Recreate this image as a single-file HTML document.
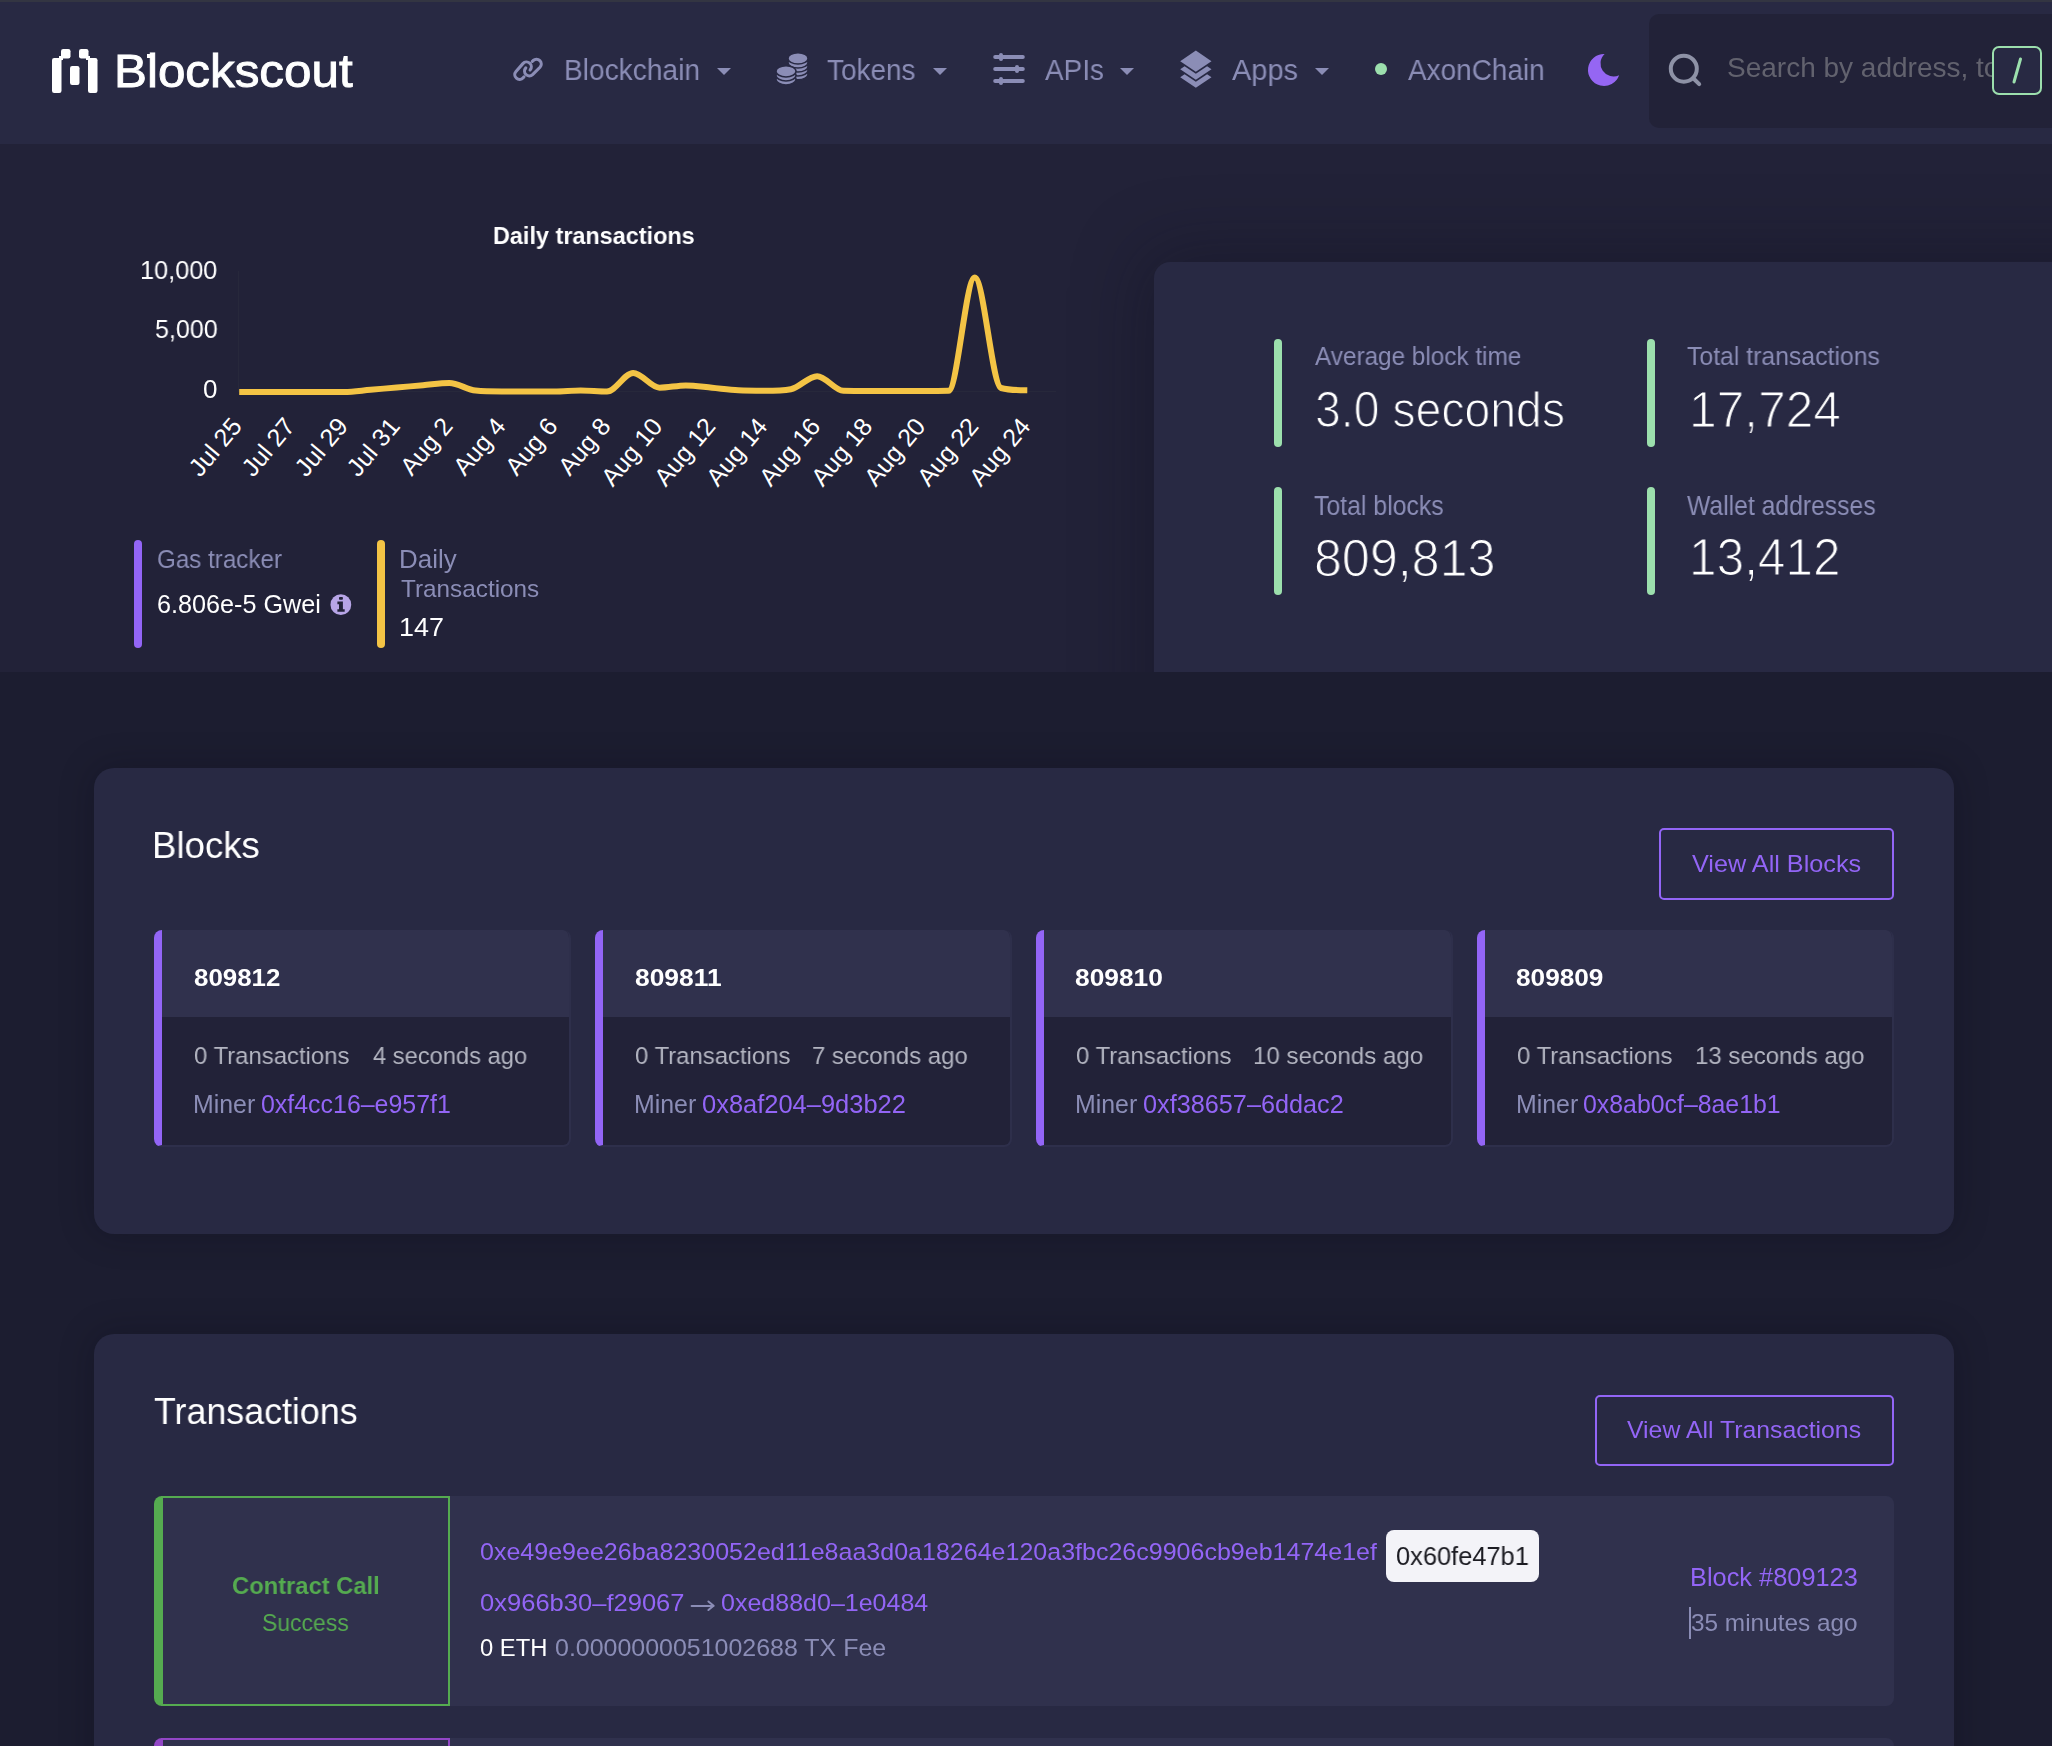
<!DOCTYPE html>
<html><head><meta charset="utf-8"><title>Blockscout</title>
<style>
html,body{margin:0;padding:0;width:2052px;height:1746px;overflow:hidden;background:#1c1d30;font-family:"Liberation Sans",sans-serif;}
.a{position:absolute;box-sizing:border-box}
.t{position:absolute;white-space:nowrap;line-height:1;transform-origin:0 0;will-change:transform}
.mk{display:inline-block;width:0;height:0;vertical-align:baseline}
.xl{position:absolute;white-space:nowrap;line-height:1;color:#fff;font-size:24px;transform-origin:100% 50%;transform:rotate(-50deg)}
</style></head><body>
<!-- top strip + nav -->
<div class="a" style="left:0;top:0;width:2052px;height:2px;background:#333542"></div>
<div class="a" style="left:0;top:2px;width:2052px;height:142px;background:#282943"></div>
<!-- logo icon -->
<svg class="a" style="left:50px;top:47px" width="50" height="48" viewBox="0 0 50 48">
  <g fill="#fff">
    <rect x="2" y="11" width="9.5" height="35" rx="2.2"/>
    <rect x="11" y="2" width="9.5" height="9.5" rx="2.2"/>
    <rect x="9" y="9" width="4" height="4"/>
    <rect x="20" y="19" width="9.5" height="19" rx="2.2"/>
    <rect x="29" y="2" width="9.5" height="9.5" rx="2.2"/>
    <rect x="36" y="9" width="4" height="4"/>
    <rect x="38" y="11" width="9.5" height="35" rx="2.2"/>
  </g>
</svg>
<div class="a" style="left:146.6px;top:53.8px;width:4px;height:4.4px;background:#fff"></div>
<!-- nav icons -->
<svg class="a" style="left:505px;top:50px" width="46" height="38" viewBox="0 0 46 38">
  <g fill="none" stroke="#8b8db6" stroke-width="3.1" stroke-linecap="round">
    <path d="M19.02 26.84 L18.20 27.78 A4.8 4.8 0 0 1 11.00 21.42 L17.90 13.62 A4.8 4.8 0 0 1 25.10 19.98 L25.10 19.98"/>
    <path d="M27.32 11.39 L28.21 10.51 A4.8 4.8 0 0 1 34.99 17.29 L27.59 24.69 A4.8 4.8 0 0 1 20.81 17.91 L20.81 17.91"/>
  </g>
</svg>
<svg class="a" style="left:770px;top:45px" width="50" height="50" viewBox="0 0 50 50">
  <g fill="#8b8db6" stroke="#282943" stroke-width="1.5">
    <ellipse cx="28" cy="29.2" rx="10" ry="5.6"/>
    <ellipse cx="28" cy="25.3" rx="10" ry="5.6"/>
    <ellipse cx="28" cy="21.4" rx="10" ry="5.6"/>
    <ellipse cx="28" cy="17.5" rx="10" ry="5.6"/>
    <ellipse cx="28" cy="13.4" rx="10" ry="5.6"/>
    <ellipse cx="16" cy="34.3" rx="10" ry="5.6"/>
    <ellipse cx="16" cy="30.3" rx="10" ry="5.6"/>
    <ellipse cx="16" cy="26.3" rx="10" ry="5.6"/>
  </g>
</svg>
<svg class="a" style="left:985px;top:45px" width="50" height="50" viewBox="0 0 50 50">
  <g fill="#8b8db6">
    <rect x="8.2" y="10" width="31.6" height="4" rx="2"/>
    <rect x="8.2" y="22.1" width="31.6" height="4" rx="2"/>
    <rect x="8.2" y="34.1" width="31.6" height="4" rx="2"/>
    <rect x="14" y="8" width="4" height="8" rx="2"/>
    <rect x="30" y="20.1" width="4" height="8" rx="2"/>
    <rect x="14" y="32.1" width="4" height="8" rx="2"/>
  </g>
</svg>
<svg class="a" style="left:1171px;top:45px" width="50" height="50" viewBox="0 0 50 50">
  <g fill="#8b8db6">
    <path d="M24.85 5.6 L40.5 16.2 L24.85 26.8 L9.2 16.2 Z"/>
    <path d="M9.2 24.2 L13.6 21.2 L24.85 28.8 L36.1 21.2 L40.5 24.2 L24.85 34.8 Z"/>
    <path d="M9.2 32.2 L13.6 29.2 L24.85 36.8 L36.1 29.2 L40.5 32.2 L24.85 42.8 Z"/>
  </g>
</svg>
<svg class="a" style="left:714px;top:67px" width="18" height="10" viewBox="0 0 18 10"><path d="M3 1 L17 1 L10 8 Z" fill="#8b8db6"/></svg>
<svg class="a" style="left:930px;top:67px" width="18" height="10" viewBox="0 0 18 10"><path d="M3 1 L17 1 L10 8 Z" fill="#8b8db6"/></svg>
<svg class="a" style="left:1117px;top:67px" width="18" height="10" viewBox="0 0 18 10"><path d="M3 1 L17 1 L10 8 Z" fill="#8b8db6"/></svg>
<svg class="a" style="left:1312px;top:67px" width="18" height="10" viewBox="0 0 18 10"><path d="M3 1 L17 1 L10 8 Z" fill="#8b8db6"/></svg>
<div class="a" style="left:1375px;top:63px;width:12px;height:12px;border-radius:6px;background:#9cdfad"></div>
<!-- moon -->
<svg class="a" style="left:1575px;top:40px" width="60" height="60" viewBox="0 0 60 60">
  <path d="M29.61 14.01 A16 16 0 1 0 44.12 35.22 A13 13 0 0 1 29.61 14.01 Z" fill="#9566f3"/>
</svg>
<!-- search -->
<div class="a" style="left:1649px;top:14px;width:420px;height:114px;border-radius:10px;background:#222238"></div>
<svg class="a" style="left:1660px;top:45px" width="50" height="50" viewBox="0 0 50 50">
  <circle cx="23.8" cy="23.7" r="13" fill="none" stroke="#8e92a6" stroke-width="4"/>
  <path d="M33.5 33.5 L39.2 39.2" stroke="#8e92a6" stroke-width="4" stroke-linecap="round"/>
</svg>
<div class="t" style="left:1727px;top:52.5px;font-size:28px;color:#62626e;width:265px;overflow:hidden;line-height:30px">Search by address, token symbol, name</div>
<div class="a" style="left:1992px;top:46px;width:50px;height:49px;border:2px solid #9cdfad;border-radius:7px;background:#282943"></div>
<svg class="a" style="left:1992px;top:46px" width="50" height="49" viewBox="0 0 50 49"><path d="M28.5 13 L22 36" stroke="#9cdfad" stroke-width="3" stroke-linecap="round"/></svg>

<!-- banner -->
<div class="a" style="left:0;top:144px;width:2052px;height:528px;background:#222238;overflow:hidden">
  <div class="a" style="left:1154px;top:118px;width:1000px;height:600px;background:#282943;border-radius:16px;box-shadow:0 0 70px 10px rgba(15,15,30,0.35)"></div>
</div>
<!-- stat bars -->
<div class="a" style="left:1274px;top:339px;width:8px;height:108px;border-radius:4px;background:#9cdfad"></div>
<div class="a" style="left:1647px;top:339px;width:8px;height:108px;border-radius:4px;background:#9cdfad"></div>
<div class="a" style="left:1274px;top:487px;width:8px;height:108px;border-radius:4px;background:#9cdfad"></div>
<div class="a" style="left:1647px;top:487px;width:8px;height:108px;border-radius:4px;background:#9cdfad"></div>
<!-- legend bars -->
<div class="a" style="left:134px;top:540px;width:8px;height:108px;border-radius:4px;background:#9365f6"></div>
<div class="a" style="left:377px;top:540px;width:8px;height:108px;border-radius:4px;background:#f4c445"></div>
<svg class="a" style="left:320px;top:585px" width="40" height="40" viewBox="0 0 40 40">
  <circle cx="20.85" cy="19.7" r="10.4" fill="#b7a5e6"/>
  <rect x="19" y="11.9" width="3.9" height="2.9" rx="0.8" fill="#222238"/>
  <path d="M17.4 16.4 H22.9 V24.3 H24.7 V26.8 H17.4 V24.3 H19 V19.3 H17.4 Z" fill="#222238"/>
</svg>
<!-- chart -->
<svg class="a" style="left:0;top:144px" width="1100" height="400" viewBox="0 144 1100 400">
  <line x1="238.5" y1="271" x2="238.5" y2="392" stroke="#27283b" stroke-width="1"/>
  <line x1="238" y1="391.5" x2="1056" y2="391.5" stroke="#27283b" stroke-width="1"/>
  <path id="cl" d="M239.20 392.00 C247.96 392.00 256.71 392.00 265.47 392.00 C274.23 392.00 282.98 392.00 291.74 392.00 C300.50 392.00 309.25 392.00 318.01 392.00 C326.77 392.00 335.52 392.00 344.28 392.00 C353.04 392.00 361.79 390.50 370.55 389.75 C379.31 389.00 388.06 388.25 396.82 387.50 C405.58 386.75 414.33 386.00 423.09 385.25 C431.85 384.50 440.60 383.00 449.36 383.00 C458.12 383.00 466.87 389.70 475.63 390.60 C484.39 391.50 493.14 391.50 501.90 391.50 C510.66 391.50 519.41 391.50 528.17 391.50 C536.93 391.50 545.68 391.50 554.44 391.50 C563.20 391.50 571.95 390.50 580.71 390.50 C589.47 390.50 598.22 391.50 606.98 391.50 C615.74 391.50 624.49 372.90 633.25 372.90 C642.01 372.90 650.76 387.70 659.52 387.70 C668.28 387.70 677.03 385.40 685.79 385.40 C694.55 385.40 703.30 386.98 712.06 387.80 C720.82 388.62 729.57 389.80 738.33 390.30 C747.09 390.80 755.84 390.80 764.60 390.80 C773.36 390.80 782.11 390.80 790.87 389.20 C799.63 387.60 808.38 376.20 817.14 376.20 C825.90 376.20 834.65 390.60 843.41 390.80 C852.17 391.00 860.92 391.00 869.68 391.00 C878.44 391.00 887.19 391.00 895.95 391.00 C904.71 391.00 913.46 391.00 922.22 391.00 C930.98 391.00 939.73 391.00 948.49 390.80 C957.25 390.60 966.00 277.50 974.76 277.50 C983.52 277.50 992.27 385.70 1001.03 388.00 C1009.79 390.30 1018.54 390.21 1027.30 390.30" fill="none" stroke="#f4c445" stroke-width="6" stroke-linejoin="round"/>
</svg>
<div class="xl" style="right:1814.80px;top:408.50px;font-size:25px;">Jul 25</div>
<div class="xl" style="right:1762.26px;top:408.50px;font-size:25px;">Jul 27</div>
<div class="xl" style="right:1709.72px;top:408.50px;font-size:25px;">Jul 29</div>
<div class="xl" style="right:1657.18px;top:408.50px;font-size:25px;">Jul 31</div>
<div class="xl" style="right:1604.64px;top:408.50px;font-size:25px;">Aug 2</div>
<div class="xl" style="right:1552.10px;top:408.50px;font-size:25px;">Aug 4</div>
<div class="xl" style="right:1499.56px;top:408.50px;font-size:25px;">Aug 6</div>
<div class="xl" style="right:1447.02px;top:408.50px;font-size:25px;">Aug 8</div>
<div class="xl" style="right:1394.48px;top:408.50px;font-size:25px;">Aug 10</div>
<div class="xl" style="right:1341.94px;top:408.50px;font-size:25px;">Aug 12</div>
<div class="xl" style="right:1289.40px;top:408.50px;font-size:25px;">Aug 14</div>
<div class="xl" style="right:1236.86px;top:408.50px;font-size:25px;">Aug 16</div>
<div class="xl" style="right:1184.32px;top:408.50px;font-size:25px;">Aug 18</div>
<div class="xl" style="right:1131.78px;top:408.50px;font-size:25px;">Aug 20</div>
<div class="xl" style="right:1079.24px;top:408.50px;font-size:25px;">Aug 22</div>
<div class="xl" style="right:1026.70px;top:408.50px;font-size:25px;">Aug 24</div>

<!-- blocks card -->
<div class="a" style="left:94px;top:768px;width:1860px;height:466px;border-radius:20px;background:#282943;box-shadow:0 0 34px 2px rgba(8,8,18,0.22)"></div>
<div class="a" style="left:1659px;top:828px;width:235px;height:72px;border:2px solid #9365f6;border-radius:5px"></div>
<div class="a" style="left:154px;top:930px;width:417px;height:217px;border-radius:8px;overflow:hidden;background:#222238;border-left:8px solid #9365f6;border-right:2px solid #2e2f4b;border-bottom:2px solid #2e2f4b"><div class="a" style="left:0;top:0;width:420px;height:87px;background:#30314d"></div></div>
<div class="a" style="left:595px;top:930px;width:417px;height:217px;border-radius:8px;overflow:hidden;background:#222238;border-left:8px solid #9365f6;border-right:2px solid #2e2f4b;border-bottom:2px solid #2e2f4b"><div class="a" style="left:0;top:0;width:420px;height:87px;background:#30314d"></div></div>
<div class="a" style="left:1036px;top:930px;width:417px;height:217px;border-radius:8px;overflow:hidden;background:#222238;border-left:8px solid #9365f6;border-right:2px solid #2e2f4b;border-bottom:2px solid #2e2f4b"><div class="a" style="left:0;top:0;width:420px;height:87px;background:#30314d"></div></div>
<div class="a" style="left:1477px;top:930px;width:417px;height:217px;border-radius:8px;overflow:hidden;background:#222238;border-left:8px solid #9365f6;border-right:2px solid #2e2f4b;border-bottom:2px solid #2e2f4b"><div class="a" style="left:0;top:0;width:420px;height:87px;background:#30314d"></div></div>

<!-- transactions card -->
<div class="a" style="left:94px;top:1334px;width:1860px;height:600px;border-radius:20px;background:#282943;box-shadow:0 0 34px 2px rgba(8,8,18,0.22)"></div>
<div class="a" style="left:1595px;top:1395px;width:299px;height:71px;border:2px solid #9365f6;border-radius:5px"></div>
<!-- tx tile 1 -->
<div class="a" style="left:154px;top:1496px;width:1740px;height:210px;border-radius:8px;background:#30314d;border-left:8px solid #55ab50"></div>
<div class="a" style="left:161px;top:1496px;width:289px;height:210px;border:2px solid #55ab50"></div>
<div class="a" style="left:1386px;top:1530px;width:153px;height:52px;border-radius:8px;background:#f3f3f8"></div>
<div class="a" style="left:1689px;top:1607px;width:2px;height:32px;background:#8b8db6"></div>
<!-- tx tile 2 (cut) -->
<div class="a" style="left:154px;top:1738px;width:1740px;height:210px;border-radius:8px;background:#30314d;border-left:8px solid #9246c6"></div>
<div class="a" style="left:161px;top:1738px;width:289px;height:210px;border:2px solid #9246c6"></div>

<svg class="a" style="left:685px;top:1590px" width="40" height="25" viewBox="0 0 40 25">
  <g fill="none" stroke="#8b8db6" stroke-width="2" stroke-linecap="round" stroke-linejoin="round">
    <path d="M6.6 15.9 L28.3 15.9"/>
    <path d="M23.4 11.5 L28.6 15.8 L23.4 20.0"/>
  </g>
</svg>
<div class="t" style="left:114.45px;top:47.71px;font-size:46.08px;color:#ffffff;transform:scaleX(1.0709);-webkit-text-stroke:0.9px #fff;">Blockscout</div>
<div class="t" style="left:563.75px;top:55.01px;font-size:29.36px;color:#8b8db6;transform:scaleX(0.9576);">Blockchain</div>
<div class="t" style="left:827.44px;top:55.01px;font-size:29.36px;color:#8b8db6;transform:scaleX(0.9517);">Tokens</div>
<div class="t" style="left:1045.00px;top:55.01px;font-size:29.36px;color:#8b8db6;transform:scaleX(0.9512);">APIs</div>
<div class="t" style="left:1232.00px;top:55.01px;font-size:29.36px;color:#8b8db6;transform:scaleX(0.9864);">Apps</div>
<div class="t" style="left:1408.00px;top:55.01px;font-size:29.36px;color:#8b8db6;transform:scaleX(0.9518);">AxonChain</div>
<div class="t" style="left:493.08px;top:224.01px;font-size:24.71px;color:#ffffff;font-weight:700;transform:scaleX(0.9479);">Daily transactions</div>
<div class="t" style="left:140.10px;top:257.40px;font-size:26.02px;color:#ffffff;transform:scaleX(0.9715);">10,000</div>
<div class="t" style="left:154.80px;top:316.01px;font-size:26.02px;color:#ffffff;transform:scaleX(0.9616);">5,000</div>
<div class="t" style="left:203.10px;top:375.90px;font-size:26.02px;color:#ffffff;transform:scaleX(0.9906);">0</div>
<div class="t" style="left:157.39px;top:547.02px;font-size:25.58px;color:#8b8db6;transform:scaleX(0.9449);">Gas tracker</div>
<div class="t" style="left:157.34px;top:591.51px;font-size:24.86px;color:#ffffff;transform:scaleX(1.0130);">6.806e-5 Gwei</div>
<div class="t" style="left:398.92px;top:547.02px;font-size:25.58px;color:#8b8db6;transform:scaleX(1.0144);">Daily</div>
<div class="t" style="left:400.51px;top:577.50px;font-size:23.40px;color:#8b8db6;transform:scaleX(1.0394);">Transactions</div>
<div class="t" style="left:398.98px;top:614.51px;font-size:25.00px;color:#ffffff;transform:scaleX(1.0780);">147</div>
<div class="t" style="left:1314.70px;top:344.10px;font-size:25.00px;color:#8b8db6;transform:scaleX(0.9724);">Average block time</div>
<div class="t" style="left:1314.68px;top:385.02px;font-size:50.00px;color:#ffffff;transform:scaleX(0.9270);-webkit-text-stroke:1.2px #282943;">3.0 seconds</div>
<div class="t" style="left:1686.50px;top:344.10px;font-size:25.00px;color:#8b8db6;transform:scaleX(0.9913);">Total transactions</div>
<div class="t" style="left:1689.27px;top:385.02px;font-size:50.00px;color:#ffffff;transform:scaleX(0.9941);-webkit-text-stroke:1.2px #282943;">17,724</div>
<div class="t" style="left:1313.50px;top:490.62px;font-size:28.49px;color:#8b8db6;transform:scaleX(0.8718);">Total blocks</div>
<div class="t" style="left:1313.99px;top:532.61px;font-size:51.45px;color:#ffffff;transform:scaleX(0.9762);-webkit-text-stroke:1.2px #282943;">809,813</div>
<div class="t" style="left:1687.00px;top:490.62px;font-size:28.49px;color:#8b8db6;transform:scaleX(0.8676);">Wallet addresses</div>
<div class="t" style="left:1689.48px;top:532.21px;font-size:51.16px;color:#ffffff;transform:scaleX(0.9688);-webkit-text-stroke:1.2px #282943;">13,412</div>
<div class="t" style="left:152.47px;top:827.20px;font-size:37.36px;color:#ffffff;transform:scaleX(0.9799);">Blocks</div>
<div class="t" style="left:1691.60px;top:852.01px;font-size:24.71px;color:#9365f6;transform:scaleX(1.0210);">View All Blocks</div>
<div class="t" style="left:193.92px;top:965.80px;font-size:24.42px;color:#ffffff;font-weight:700;transform:scaleX(1.0605);">809812</div>
<div class="t" style="left:193.86px;top:1044.01px;font-size:24.71px;color:#b3b5c1;transform:scaleX(0.9679);">0 Transactions</div>
<div class="t" style="left:372.83px;top:1044.01px;font-size:24.71px;color:#b3b5c1;transform:scaleX(0.9590);">4 seconds ago</div>
<div class="t" style="left:193.33px;top:1091.70px;font-size:24.86px;color:#8b8db6;transform:scaleX(0.9927);">Miner</div>
<div class="t" style="left:261.13px;top:1091.70px;font-size:24.86px;color:#9365f6;transform:scaleX(1.0026);">0xf4cc16–e957f1</div>
<div class="t" style="left:634.81px;top:965.80px;font-size:24.42px;color:#ffffff;font-weight:700;transform:scaleX(1.0817);">809811</div>
<div class="t" style="left:634.86px;top:1044.01px;font-size:24.71px;color:#b3b5c1;transform:scaleX(0.9679);">0 Transactions</div>
<div class="t" style="left:812.20px;top:1044.01px;font-size:24.71px;color:#b3b5c1;transform:scaleX(0.9692);">7 seconds ago</div>
<div class="t" style="left:634.33px;top:1091.70px;font-size:24.86px;color:#8b8db6;transform:scaleX(0.9927);">Miner</div>
<div class="t" style="left:701.91px;top:1091.70px;font-size:24.86px;color:#9365f6;transform:scaleX(1.0243);">0x8af204–9d3b22</div>
<div class="t" style="left:1075.01px;top:965.80px;font-size:24.42px;color:#ffffff;font-weight:700;transform:scaleX(1.0793);">809810</div>
<div class="t" style="left:1075.86px;top:1044.01px;font-size:24.71px;color:#b3b5c1;transform:scaleX(0.9679);">0 Transactions</div>
<div class="t" style="left:1253.19px;top:1044.01px;font-size:24.71px;color:#b3b5c1;transform:scaleX(0.9755);">10 seconds ago</div>
<div class="t" style="left:1075.33px;top:1091.70px;font-size:24.86px;color:#8b8db6;transform:scaleX(0.9927);">Miner</div>
<div class="t" style="left:1142.62px;top:1091.70px;font-size:24.86px;color:#9365f6;transform:scaleX(1.0157);">0xf38657–6ddac2</div>
<div class="t" style="left:1516.21px;top:965.80px;font-size:24.42px;color:#ffffff;font-weight:700;transform:scaleX(1.0730);">809809</div>
<div class="t" style="left:1516.86px;top:1044.01px;font-size:24.71px;color:#b3b5c1;transform:scaleX(0.9679);">0 Transactions</div>
<div class="t" style="left:1694.50px;top:1044.01px;font-size:24.71px;color:#b3b5c1;transform:scaleX(0.9714);">13 seconds ago</div>
<div class="t" style="left:1516.33px;top:1091.70px;font-size:24.86px;color:#8b8db6;transform:scaleX(0.9927);">Miner</div>
<div class="t" style="left:1583.43px;top:1091.70px;font-size:24.86px;color:#9365f6;transform:scaleX(0.9978);">0x8ab0cf–8ae1b1</div>
<div class="t" style="left:153.58px;top:1393.00px;font-size:37.21px;color:#ffffff;transform:scaleX(0.9624);">Transactions</div>
<div class="t" style="left:1626.60px;top:1418.01px;font-size:24.71px;color:#9365f6;transform:scaleX(1.0048);">View All Transactions</div>
<div class="t" style="left:231.65px;top:1573.80px;font-size:24.42px;color:#55ab50;font-weight:700;transform:scaleX(0.9730);">Contract Call</div>
<div class="t" style="left:261.57px;top:1611.51px;font-size:23.55px;color:#55ab50;transform:scaleX(0.9747);">Success</div>
<div class="t" style="left:479.62px;top:1540.01px;font-size:23.84px;color:#9365f6;transform:scaleX(1.0500);">0xe49e9ee26ba8230052ed11e8aa3d0a18264e120a3fbc26c9906cb9eb1474e1ef</div>
<div class="t" style="left:1395.91px;top:1543.50px;font-size:25.73px;color:#1b1b22;transform:scaleX(0.9880);">0x60fe47b1</div>
<div class="t" style="left:479.61px;top:1591.40px;font-size:23.84px;color:#9365f6;transform:scaleX(1.0717);">0x966b30–f29067</div>
<div class="t" style="left:720.62px;top:1591.40px;font-size:23.84px;color:#9365f6;transform:scaleX(1.0497);">0xed88d0–1e0484</div>
<div class="t" style="left:479.67px;top:1637.31px;font-size:23.69px;color:#ffffff;transform:scaleX(1.0049);">0 ETH</div>
<div class="t" style="left:554.53px;top:1637.31px;font-size:23.69px;color:#8b8db6;transform:scaleX(1.0535);">0.0000000051002688 TX Fee</div>
<div class="t" style="left:1689.97px;top:1565.31px;font-size:25.15px;color:#9365f6;transform:scaleX(1.0090);">Block #809123</div>
<div class="t" style="left:1691.15px;top:1612.02px;font-size:23.26px;color:#8b8db6;transform:scaleX(1.0480);">35 minutes ago</div>
</body></html>
